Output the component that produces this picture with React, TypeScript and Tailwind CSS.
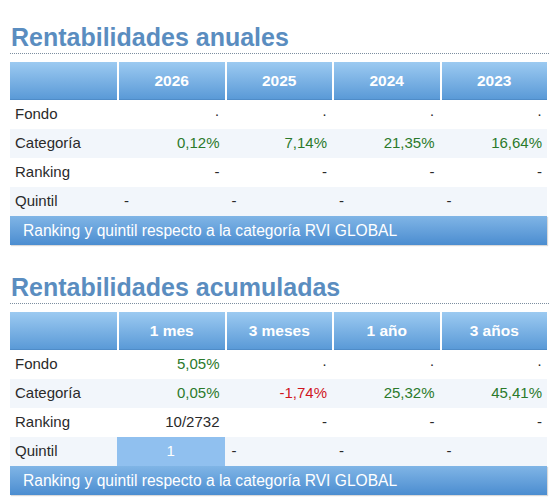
type Cell = { text: string; tone?: "pos" | "neg" | "plain"; align?: "right" | "left" | "center"; hl?: boolean };

type Row = { label: string; cells: Cell[] };

type Section = { title: string; heads: string[]; rows: Row[] };

const dot: Cell = { text: "·" };
const dash: Cell = { text: "-" };
const ldash: Cell = { text: "-", align: "left" };

const sections: Section[] = [
  {
    title: "Rentabilidades anuales",
    heads: ["2026", "2025", "2024", "2023"],
    rows: [
      { label: "Fondo", cells: [dot, dot, dot, dot] },
      {
        label: "Categoría",
        cells: [
          { text: "0,12%", tone: "pos" },
          { text: "7,14%", tone: "pos" },
          { text: "21,35%", tone: "pos" },
          { text: "16,64%", tone: "pos" },
        ],
      },
      { label: "Ranking", cells: [dash, dash, dash, dash] },
      { label: "Quintil", cells: [ldash, ldash, ldash, ldash] },
    ],
  },
  {
    title: "Rentabilidades acumuladas",
    heads: ["1 mes", "3 meses", "1 año", "3 años"],
    rows: [
      { label: "Fondo", cells: [{ text: "5,05%", tone: "pos" }, dot, dot, dot] },
      {
        label: "Categoría",
        cells: [
          { text: "0,05%", tone: "pos" },
          { text: "-1,74%", tone: "neg" },
          { text: "25,32%", tone: "pos" },
          { text: "45,41%", tone: "pos" },
        ],
      },
      { label: "Ranking", cells: [{ text: "10/2732" }, dash, dash, dash] },
      { label: "Quintil", cells: [{ text: "1", align: "center", hl: true }, ldash, ldash, ldash] },
    ],
  },
];

function DataCell({ cell }: { cell: Cell }) {
  const align = cell.align ?? "right";
  const color =
    cell.tone === "pos" ? "text-[#2b7a2b]" : cell.tone === "neg" ? "text-[#d0161f]" : "text-[#2a2a2a]";
  if (cell.hl) {
    return (
      <div className="-ml-[2px] flex items-center justify-center bg-[#90c0ef] text-white">
        {cell.text}
      </div>
    );
  }
  return (
    <div
      className={
        "flex items-center " +
        (align === "left" ? "justify-start pl-[5px] " : align === "center" ? "justify-center " : "justify-end pr-[5px] ") +
        color
      }
    >
      {cell.text}
    </div>
  );
}

function ReturnsTable({ section, first }: { section: Section; first?: boolean }) {
  return (
    <section className={first ? "" : "mt-[28px]"}>
      <h2 className="w-[539px] border-b border-dotted border-[#7d8ea0] pb-[2px] pl-[1px] text-[25px] font-bold leading-[28px] text-[#5a8dc0]">
        {section.title}
      </h2>
      <div className="mt-[8px] w-[537px]">
        <div className="grid h-[38px] grid-cols-[107px_repeat(4,1fr)] gap-x-[2px]">
          <div className="border-b border-[#4f8cc8] bg-gradient-to-b from-[#9ccaf1] to-[#5a9ad7]" />
          {section.heads.map((h) => (
            <div
              key={h}
              className="flex items-center justify-center border-b border-[#4f8cc8] bg-gradient-to-b from-[#9ccaf1] to-[#5a9ad7] text-[15.5px] font-bold text-white"
            >
              {h}
            </div>
          ))}
        </div>
        {section.rows.map((row, i) => (
          <div
            key={row.label}
            className={
              "grid h-[29px] grid-cols-[107px_repeat(4,1fr)] gap-x-[2px] text-[15px] " +
              (i % 2 === 1 ? "bg-[#f2f6fb]" : "bg-white")
            }
          >
            <div className="flex items-center pl-[5px] text-[#2a2a2a]">{row.label}</div>
            {row.cells.map((c, j) => (
              <DataCell key={j} cell={c} />
            ))}
          </div>
        ))}
        <div className="flex h-[29px] items-center bg-gradient-to-b from-[#80b5e6] to-[#4b8dd0] pl-[13px] text-[15.6px] text-white shadow-[1px_1px_1px_rgba(0,0,0,0.15)]">
          Ranking y quintil respecto a la categoría RVI GLOBAL
        </div>
      </div>
    </section>
  );
}

export default function App() {
  return (
    <div className="h-[500px] w-[558px] bg-white pl-[10px] pt-[23px] font-['Liberation_Sans',Arial,sans-serif]">
      {sections.map((s, i) => (
        <ReturnsTable key={s.title} section={s} first={i === 0} />
      ))}
    </div>
  );
}
